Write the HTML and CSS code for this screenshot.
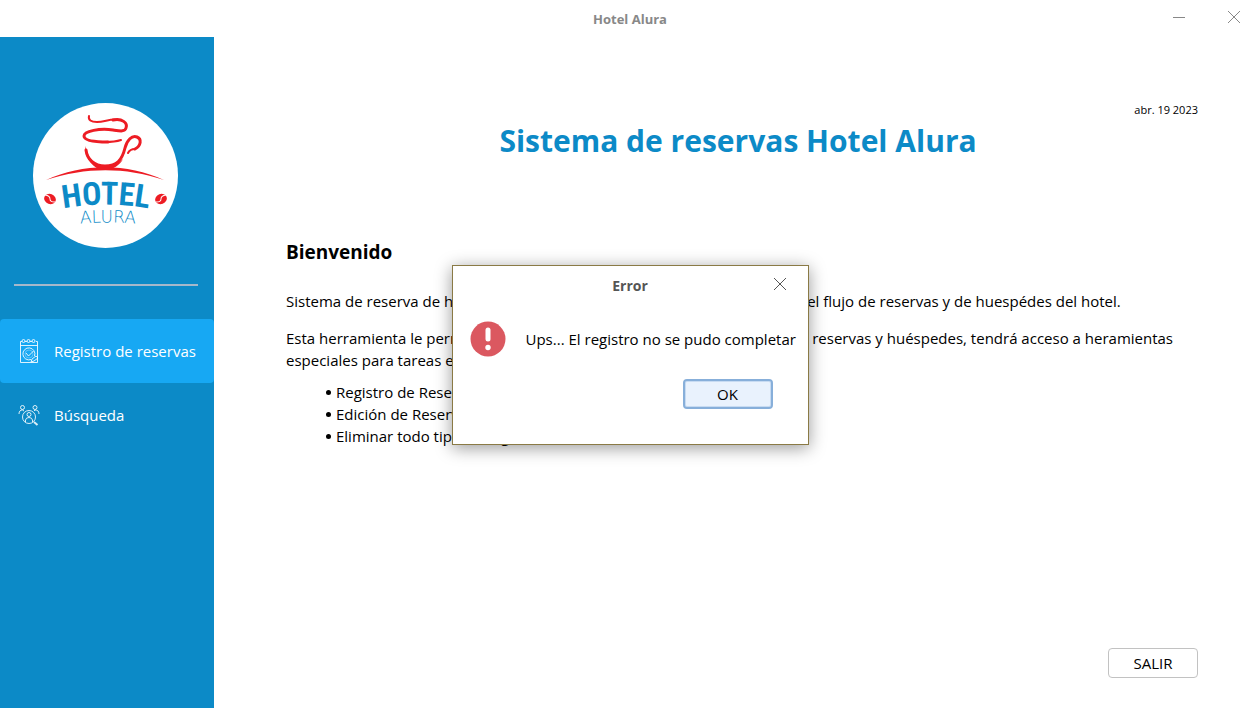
FILE: index.html
```html
<!DOCTYPE html>
<html lang="es">
<head>
<meta charset="utf-8">
<meta name="viewport" content="width=device-width, initial-scale=1">
<title>Hotel Alura</title>
<link rel="stylesheet" href="styles.css">
</head>
<body>
<div class="window">
  <header class="titlebar">
    <h1 class="titlebar-text">Hotel Alura</h1>
    <div class="titlebar-controls">
      <button class="icon-button" type="button" aria-label="Minimizar">
        <svg width="14" height="14" viewBox="0 0 14 14"><path d="M1 7.5h12" stroke="#888" fill="none"/></svg>
      </button>
      <button class="icon-button" type="button" aria-label="Cerrar">
        <svg width="14" height="14" viewBox="0 0 14 14"><path d="M1 1l12 12M13 1L1 13" stroke="#888" fill="none"/></svg>
      </button>
    </div>
  </header>
  <div class="body">
    <aside class="sidebar">
      <svg class="logo" width="145" height="145" viewBox="0 0 145 145" role="img" aria-label="Hotel Alura">
        <defs>
          <path id="arc-hotel" d="M22 107Q73 96 124 107"/>
          <path id="arc-alura" d="M34 122Q74 117 116 122"/>
        </defs>
        <circle cx="72.500" cy="72.500" r="72.500" fill="#fff"/>
        <g fill="none" stroke="#ed1c24" stroke-linecap="round" stroke-linejoin="round">
          <path stroke-width="2" d="M56 13C55 17 58 19 64 19C72 19 78 15 86 17"/>
          <path stroke-width="3" d="M80 17C89 15 95 20 93 25C92 29 87 28 80 27C67 25 51 28 51 33C51 38 65 39 75 39"/>
          <path stroke-width="2" d="M72 39C80 39 85 38 88 37"/>
          <path stroke-width="3" d="M53 47C54 56 61 63 72 63C84 63 89 57 92 45C94 37 99 32 104 34C109 36 108 43 102 46"/>
          <path stroke-width="2" d="M102 46C97 46 95 50 95 50"/>
        </g>
        <path fill="#ed1c24" d="M52 43C52 55 60 67 72 67C80 67 87 62 90 56C85 61 79 63 73 63C61 63 55 55 52 43Z"/>
        <path fill="#ed1c24" d="M13 77C50 60 94 60 131 77C92 64 53 64 13 77Z"/>
        <g transform="translate(17 96) rotate(20)"><ellipse rx="6" ry="5" fill="#ed1c24"/><path d="M-6 -2Q-1 -3 0 0T6 1" fill="none" stroke="#fff"/></g>
        <g transform="translate(128 96) rotate(-20)"><ellipse rx="6" ry="5" fill="#ed1c24"/><path d="M6 -2Q1 -3 0 0T-6 1" fill="none" stroke="#fff"/></g>
        <text class="logo-hotel"><textPath href="#arc-hotel" startOffset="50%">HOTEL</textPath></text>
        <text class="logo-alura"><textPath href="#arc-alura" startOffset="50%">ALURA</textPath></text>
      </svg>
      <hr class="divider">
      <nav class="menu">
        <button class="menu-item active" type="button">
          <svg width="22" height="26" viewBox="0 0 22 26" fill="none" stroke="#fff" stroke-opacity=".85">
            <path d="M4 3.500H2.500v21h17V3.500H18M7 3.500h2M12 3.500h2M2.500 7.500h17"/>
            <circle cx="5.500" cy="3" r="1.500"/><circle cx="10.500" cy="3" r="1.500"/><circle cx="15.500" cy="3" r="1.500"/>
            <path d="M13 21.500A6 6 0 1 1 16.500 18"/><path d="M8 15l2.500 3 5-5"/>
            <circle cx="11" cy="16" r="4" stroke-opacity=".3"/>
            <path d="M13 24l1-3 4-3 2 2-4 3z"/>
          </svg>
          <span>Registro de reservas</span>
        </button>
        <button class="menu-item" type="button">
          <svg width="22" height="22" viewBox="0 0 22 22" fill="none" stroke="#fff" stroke-opacity=".85">
            <circle cx="4.500" cy="3.500" r="2"/><circle cx="17" cy="3.500" r="2"/>
            <path d="M1 10C1 7 2.500 6 4.500 6L6 7M21 10C21 7 19.500 6 17 6L16 7"/>
            <circle cx="11" cy="13" r="6.500"/><circle cx="11" cy="10.500" r="2"/>
            <path d="M7.500 18v-2Q8 13.500 11 13.500T14.500 16v2"/>
            <path d="M16 18l3.500 3" stroke-width="2"/>
          </svg>
          <span>Búsqueda</span>
        </button>
      </nav>
    </aside>
    <main class="main">
      <time class="date" datetime="2023-04-19">abr. 19 2023</time>
      <h2 class="headline">Sistema de reservas Hotel Alura</h2>
      <section class="content">
        <h3 class="welcome">Bienvenido</h3>
        <p class="intro">Sistema de reserva de hotel. Controle y administre de forma óptima y fácil el flujo de reservas y de huespédes del hotel.</p>
        <p class="intro">Esta herramienta le permitirá llevar un control completo y detallado de sus reservas y huéspedes, tendrá acceso a heramientas especiales para tareas específicas como lo son:</p>
        <ul class="tasks">
          <li>Registro de Reservas y Huéspedes</li>
          <li>Edición de Reservas y Huéspedes existentes</li>
          <li>Eliminar todo tipo de registros</li>
        </ul>
      </section>
      <button class="button exit" type="button">SALIR</button>
    </main>
  </div>
  <div class="overlay">
    <section class="dialog" role="alertdialog" aria-labelledby="dialog-title" aria-describedby="dialog-message">
      <header class="dialog-header">
        <h2 class="dialog-title" id="dialog-title">Error</h2>
        <button class="icon-button" type="button" aria-label="Cerrar diálogo">
          <svg width="14" height="14" viewBox="0 0 14 14"><path d="M1 1l12 12M13 1L1 13" stroke="#555" fill="none"/></svg>
        </button>
      </header>
      <div class="dialog-body">
        <svg class="dialog-icon" width="36" height="36" viewBox="0 0 36 36">
          <circle cx="18" cy="18" r="17.500" fill="#db5860"/>
          <path d="M18 9v9" stroke="#fff" stroke-width="5" stroke-linecap="round"/>
          <circle cx="18" cy="26.500" r="2.700" fill="#fff"/>
        </svg>
        <p class="dialog-message" id="dialog-message">Ups... El registro no se pudo completar</p>
      </div>
      <button class="button primary" type="button">OK</button>
    </section>
  </div>
</div>
</body>
</html>
```
FILE: styles.css
```css
* {
  box-sizing: border-box;
}

body {
  margin: 0;
  font-family: "Open Sans", "Noto Sans", sans-serif;
  font-size: 15px;
  line-height: 22px;
  color: #000;
  background: #fff;
}

h1, h2, h3, p, ul {
  margin: 0;
}

button {
  font: inherit;
  color: inherit;
  cursor: pointer;
}

.window {
  position: relative;
  display: flex;
  flex-direction: column;
  min-height: 100vh;
}

.titlebar {
  display: grid;
  grid-template-columns: 1fr auto 1fr;
  align-items: center;
  height: 37px;
}

.titlebar-text {
  grid-column: 2;
  font-size: 13px;
  line-height: 20px;
  color: #888;
}

.titlebar-controls {
  display: flex;
  justify-content: flex-end;
  gap: 41px;
  padding: 0 19px 4px 0;
}

.icon-button {
  display: flex;
  padding: 0;
  border: 0;
  background: none;
}

.body {
  display: flex;
  flex: 1;
}

.sidebar {
  flex: none;
  width: 214px;
  color: #fff;
  background: #0c8ac7;
}

.logo {
  display: block;
  margin: 66px 0 36px 33px;
}

.logo-hotel,
.logo-alura {
  fill: #0c8ac7;
  text-anchor: middle;
}

.logo-hotel {
  font: bold 32px "Roboto Condensed", Roboto, sans-serif;
}

.logo-alura {
  font: 200 17px "DejaVu Sans", sans-serif;
}

.divider {
  height: 2px;
  margin: 0 16px 33px 14px;
  border: 0;
  background: #a5b8cb;
}

.menu {
  display: flex;
  flex-direction: column;
}

.menu-item {
  display: flex;
  align-items: center;
  gap: 14px;
  height: 64px;
  padding: 0 18px;
  border: 0;
  border-radius: 4px;
  text-align: left;
  white-space: nowrap;
  background: none;
}

.menu-item.active {
  background: #17a8f3;
}

.menu-item svg {
  flex: none;
}

.main {
  display: flex;
  flex: 1;
  flex-direction: column;
  padding: 64px 62px 30px 72px;
}

.date {
  align-self: flex-end;
  font-size: 11px;
  line-height: 18px;
}

.headline {
  align-self: center;
  margin-right: 8px;
  font-size: 30px;
  line-height: 44px;
  color: #0c8ac7;
}

.content {
  padding-top: 74px;
}

.welcome {
  margin-bottom: 23px;
  font-size: 19px;
  line-height: 30px;
}

.intro {
  margin-bottom: 15px;
}

.tasks {
  margin-top: -5px;
  padding-left: 40px;
  list-style: none;
}

.tasks li {
  display: flex;
  align-items: center;
  gap: 5px;
}

.tasks li::before {
  content: "";
  width: 5px;
  height: 5px;
  border-radius: 50%;
  background: #000;
}

.button {
  width: 90px;
  height: 30px;
  padding: 0;
  border: 1px solid #c2c2c2;
  border-radius: 4px;
  background: #fff;
}

.exit {
  align-self: flex-end;
  margin-top: auto;
}

.overlay {
  position: absolute;
  inset: 0;
  display: flex;
  align-items: center;
  justify-content: center;
  padding-top: 2px;
}

.dialog {
  display: flex;
  flex-direction: column;
  width: 357px;
  padding: 9px 15px 35px;
  border: 1px solid #8a7a45;
  background: #fff;
  box-shadow: 0 3px 16px rgba(0, 0, 0, 0.4);
}

.dialog-header {
  display: grid;
  grid-template-columns: 1fr auto 1fr;
  align-items: center;
}

.dialog-header .icon-button {
  justify-self: end;
  margin: 0 6px 4px 0;
}

.dialog-title {
  grid-column: 2;
  font-size: 14px;
  line-height: 22px;
  color: #555;
}

.dialog-body {
  display: flex;
  align-items: center;
  gap: 20px;
  margin: 24px 0 22px 2px;
}

.dialog-icon {
  flex: none;
}

.dialog-message {
  white-space: nowrap;
}

.primary {
  align-self: flex-end;
  margin-right: 20px;
  border: 2px solid #87afda;
  box-shadow: inset 0 0 0 1px #c7dbf2;
  background: #e9f2fd;
}
```
